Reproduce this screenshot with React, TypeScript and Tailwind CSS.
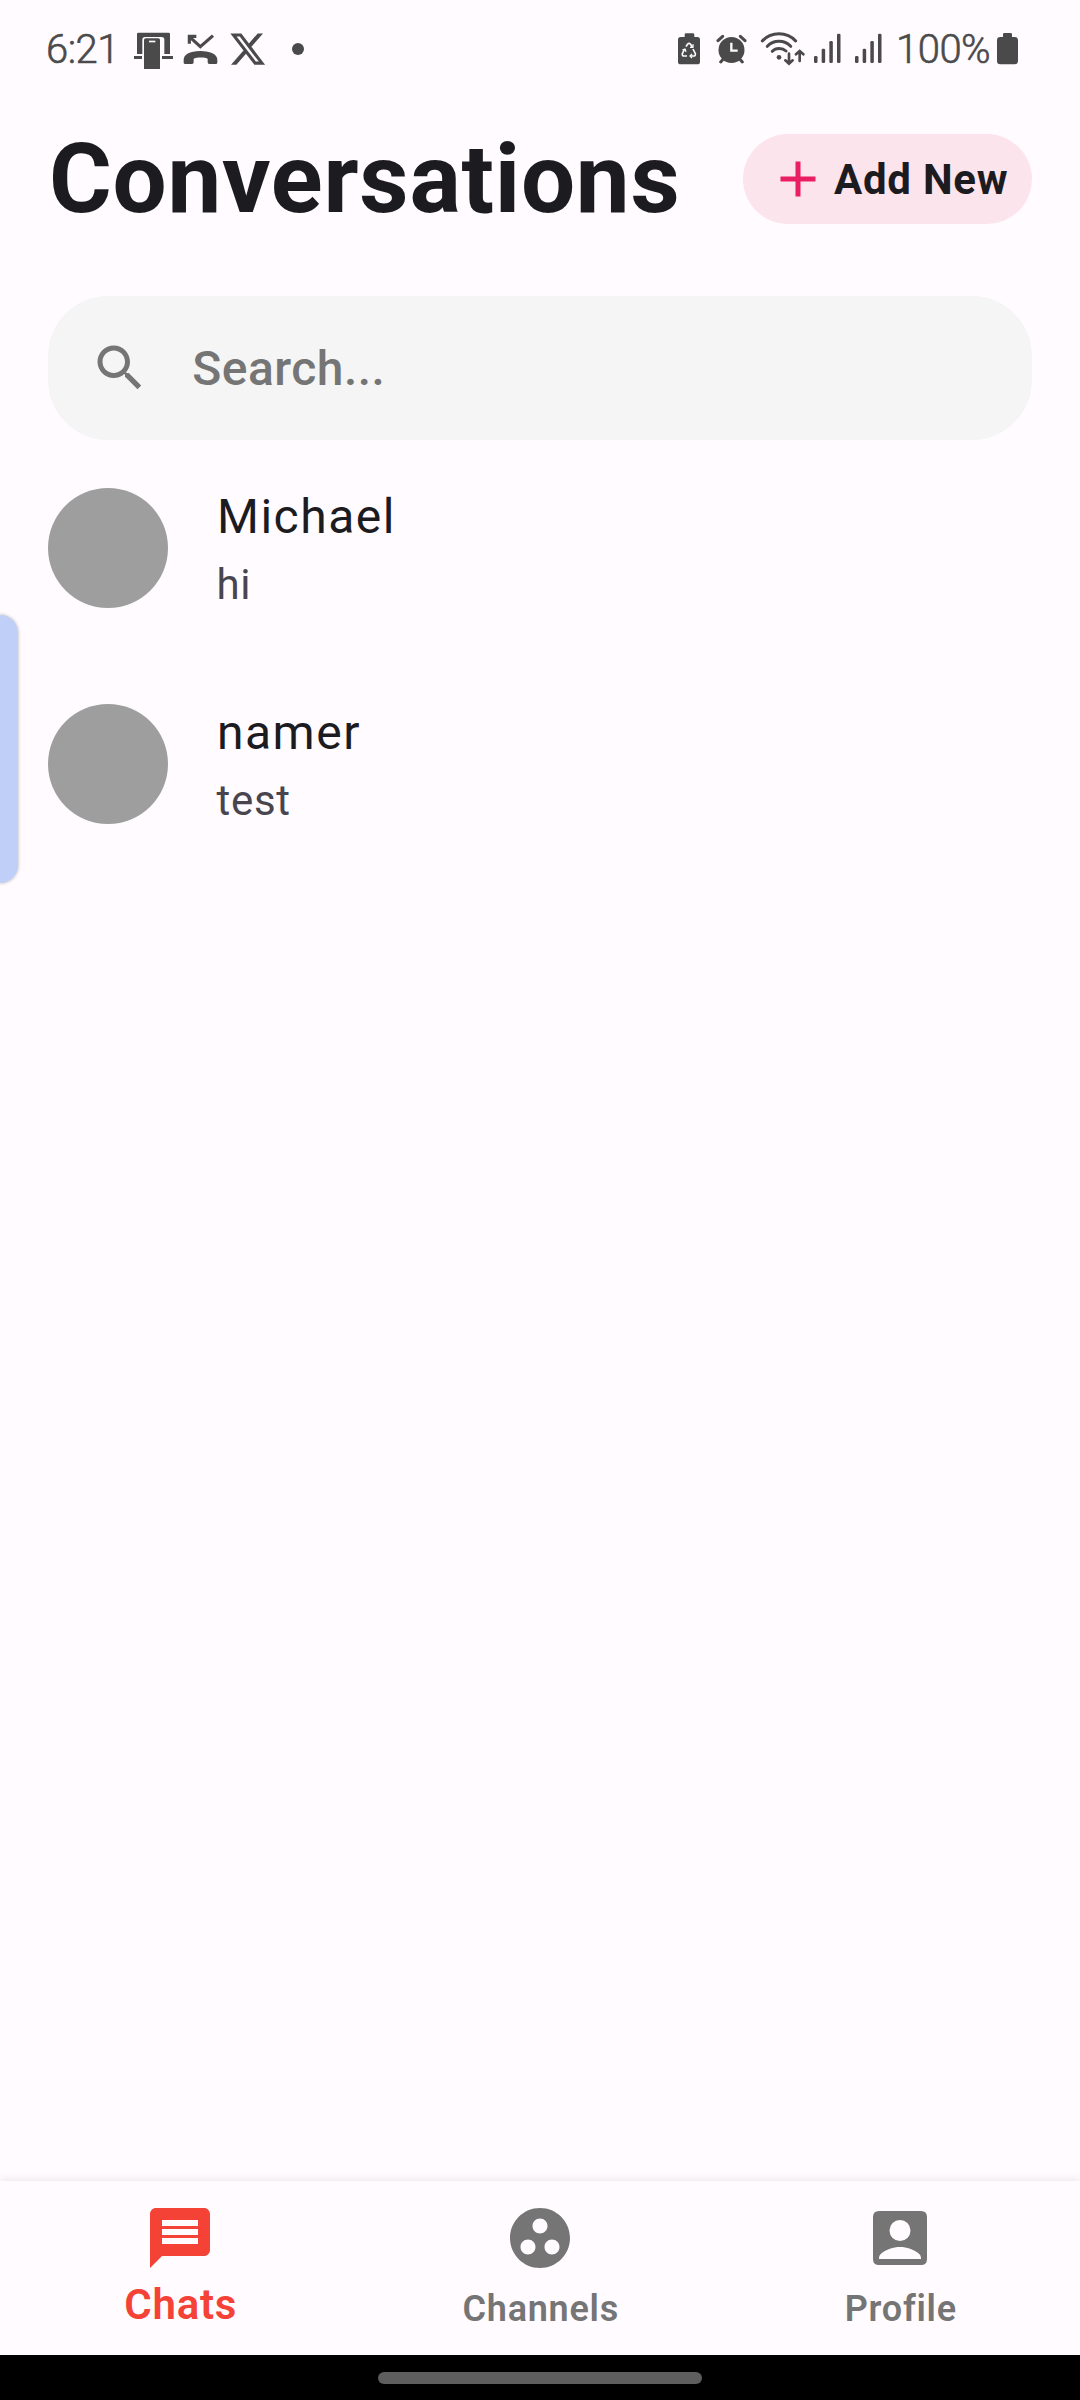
import type { ReactNode } from "react";

const ink = "#4b4a4b";

function Glyph({ x, w, className, children }: { x: number; w: number; className: string; children: ReactNode }) {
  return (
    <svg viewBox={`${x} 0 ${w} 180`} className={`h-[60px] shrink-0 ${className}`} fill={ink}>
      {children}
    </svg>
  );
}

function SignalBars({ className }: { className: string }) {
  return (
    <Glyph x={0} w={81} className={`w-[27px] ${className}`}>
      <rect x="0" y="108" width="10.5" height="21" rx="4" />
      <rect x="23" y="86" width="10.5" height="43" rx="4" />
      <rect x="46" y="63" width="10.5" height="66" rx="4" />
      <rect x="69" y="41" width="10.5" height="88" rx="4" />
    </Glyph>
  );
}

function StatusBar() {
  return (
    <div className="flex h-24 items-start justify-between pt-5 pr-[62px] pl-[46px] text-[#4b4a4b]">
      <div className="flex items-center">
        <span className="w-[88px] text-[40px] leading-[60px] font-light tracking-[-0.5px] whitespace-nowrap [-webkit-text-stroke:0.6px_#4b4a4b]">6:21</span>
        <Glyph x={312} w={117} className="w-[39px]">
          <path d="M325 38h91q4 0 4 4v60h-17V59q0-8-8-8h-50q-8 0-8 8v43h-16V42q0-4 4-4z" />
          <path d="M347 55h38q5 0 5 5v87h-48V60q0-5 5-5z" />
          <path d="M312 108h24v9h-24zM396 108h33v9h-33z" />
          <rect x="357" y="62" width="19" height="5" fill="#fffbff" />
        </Glyph>
        <Glyph x={459} w={105} className="ml-2.5 w-[35px]">
          <path d="M478 50l33 30 38-33M478 71V49h21" fill="none" stroke={ink} strokeWidth="9.5" />
          <path d="M461 119c0-14 17-26 50-26s51 12 51 26v9q0 4-5 4h-19q-5 0-5-5v-11c-6-5-34-5-42 0v11q0 5-5 5h-20q-5 0-5-4z" />
        </Glyph>
        <Glyph x={600} w={108} className="ml-3 w-[36px]">
          <path transform="translate(595 29.3) scale(4.83)" d="M18.244 2.25h3.308l-7.227 8.26 8.502 11.24H16.17l-5.214-6.817L4.99 21.75H1.68l7.73-8.835L1.254 2.25H8.08l4.713 6.231zm-1.161 17.52h1.833L7.084 4.126H5.117z" />
        </Glyph>
        <span className="mt-[-2px] ml-[26px] size-3 rounded-full bg-[#4b4a4b]" />
      </div>
      <div className="flex items-center">
        <Glyph x={54} w={66} className="w-[22px]">
          <path d="M78 40h21q4 0 4 4v7h9q8 0 8 8v66q0 8-8 8H62q-8 0-8-8V59q0-8 8-8h12v-7q0-4 4-4z" />
          <g fill="none" stroke="#fffbff" strokeWidth="5" strokeLinejoin="round">
            <path d="M78 80l5-8q4-4 8 0l6 9M74 87l-7 14q-1 7 5 7h9M99 87l7 14q1 7-5 7H91" />
            <path d="M99 73v9h-9M67 90l8-3 3 8M96 102l-6 6 6 6" strokeWidth="4" />
          </g>
        </Glyph>
        <Glyph x={168} w={93} className="ml-4 w-[31px]">
          <circle cx="214.500" cy="90" r="39" />
          <path d="M174 62l14-13M255 62l-14-13M190 117l-8 9M239 117l8 9" stroke={ink} strokeWidth="9" strokeLinecap="round" />
          <path d="M214 68v24h19" fill="none" stroke="#fffbff" strokeWidth="7" />
        </Glyph>
        <Glyph x={300} w={135} className="ml-[13px] w-[45px]">
          <g fill="none" stroke={ink} strokeWidth="9" strokeLinecap="round">
            <path d="M307 63c26-29 74-29 100 0M322 79c19-20 51-20 70 0M337 94c10-11 30-11 41-1" />
            <path d="M387 101v29M376 121l11 10 11-10M419 123V94M408 103l11-10 11 10" strokeWidth="8" />
          </g>
          <circle cx="357" cy="112" r="7" />
        </Glyph>
        <SignalBars className="ml-[9px]" />
        <SignalBars className="ml-[14px]" />
        <span className="ml-[14px] w-[101px] text-[40px] leading-[60px] font-light tracking-[-0.5px] whitespace-nowrap [-webkit-text-stroke:0.6px_#4b4a4b]">100%</span>
        <Glyph x={471} w={63} className="w-[21px]">
          <path d="M493 39h19q4 0 4 4v8h8q10 0 10 10v62q0 10-10 10h-43q-10 0-10-10V61q0-10 10-10h8v-8q0-4 4-4z" />
        </Glyph>
      </div>
    </div>
  );
}

const chats = [
  { name: "Michael", message: "hi" },
  { name: "namer", message: "test" },
];

const tabs = [
  {
    label: "Chats",
    active: true,
    path: "M20 2H4c-1.100 0-2 .9-2 2v18l4-4h14c1.100 0 2-.9 2-2V4c0-1.100-.9-2-2-2zM6 6h12v2H6zm0 3h12v2H6zm0 3h12v2H6z",
  },
  {
    label: "Channels",
    active: false,
    path: "M12 2C6.480 2 2 6.480 2 12s4.480 10 10 10 10-4.480 10-10S17.520 2 12 2zM8 17.500c-1.380 0-2.500-1.120-2.500-2.500s1.120-2.500 2.500-2.500 2.500 1.120 2.500 2.500-1.120 2.500-2.500 2.500zM9.500 8c0-1.380 1.120-2.500 2.500-2.500s2.500 1.120 2.500 2.500-1.120 2.500-2.500 2.500S9.500 9.380 9.500 8zm6.500 9.500c-1.380 0-2.500-1.120-2.500-2.500s1.120-2.500 2.500-2.500 2.500 1.120 2.500 2.500-1.120 2.500-2.500 2.500z",
  },
  {
    label: "Profile",
    active: false,
    path: "M5 3h14q2 0 2 2v14q0 2-2 2H5q-2 0-2-2V5q0-2 2-2zM12 6a3.500 3.500 0 1 0 0 7 3.500 3.500 0 0 0 0-7zM19 19v-.23c0-.62-.28-1.200-.76-1.580C16.530 15.820 14.360 15 12 15s-4.530.82-6.240 2.190C5.280 17.570 5 18.150 5 18.770V19z",
  },
];

export default function App() {
  return (
    <div className="relative flex h-[2400px] w-[1080px] flex-col overflow-hidden bg-[#fffbff] font-['Roboto',sans-serif] text-[#1c1b1f]">
      <StatusBar />
      <header className="mt-[27px] flex h-[112px] items-center justify-between pr-12 pl-[49px]">
        <h1 className="text-[96px] leading-[112px] font-bold tracking-[0.75px]">Conversations</h1>
        <button className="flex h-[90px] w-[289px] items-center rounded-full bg-[#fce4ec] pl-[25px]">
          <svg viewBox="0 0 24 24" className="size-[60px]" fill="#e91e63">
            <path d="M19 13h-6v6h-2v-6H5v-2h6V5h2v6h6z" />
          </svg>
          <span className="mt-0.5 ml-1.5 text-[42px] leading-[60px] font-bold tracking-[0.75px] whitespace-nowrap">Add New</span>
        </button>
      </header>
      <div className="mx-12 mt-[61px] flex h-36 items-center rounded-[60px] bg-[#f5f5f5] pl-[42px] text-[#757575]">
        <svg viewBox="0 0 24 24" className="size-[60px]" fill="currentColor">
          <path d="M15.500 14h-.79l-.28-.27C15.410 12.590 16 11.110 16 9.500 16 5.910 13.090 3 9.500 3S3 5.910 3 9.500 5.910 16 9.500 16c1.610 0 3.090-.59 4.230-1.570l.27.28v.79l5 4.990L20.490 19zm-6 0C7.010 14 5 11.990 5 9.500S7.010 5 9.500 5 14 7.010 14 9.500 11.990 14 9.500 14z" />
        </svg>
        <span className="mt-0.5 ml-[42.3px] text-[48px] leading-[72px] font-medium tracking-[0.45px]">Search...</span>
      </div>
      <main className="flex-1">
        {chats.map((c) => (
          <div key={c.name} className="flex h-[216px] items-center gap-12 px-12">
            <div className="size-[120px] rounded-full bg-[#9e9e9e]" />
            <div>
              <div className="mb-0.5 pl-px text-[48px] leading-[72px] tracking-[1.5px]">{c.name}</div>
              <div className="pl-[0.4px] text-[42px] leading-[60px] tracking-[0.75px] text-[#49454f]">{c.message}</div>
            </div>
          </div>
        ))}
      </main>
      <div className="absolute top-[615px] left-0 h-[268px] w-[18px] rounded-r-[18px] bg-[#bfcff8] shadow-[0_0_3px_1px_rgba(0,0,0,0.18)]" />
      <nav className="grid h-[174px] grid-cols-3 bg-[#fffbff] shadow-[0_-1px_9px_rgba(0,0,0,0.09)]">
        {tabs.map((t) => (
          <div key={t.label} className={t.active ? "flex flex-col items-center pt-[21px] text-[#f44336]" : "flex flex-col items-center pt-[21px] text-[#757575]"}>
            <svg viewBox="0 0 24 24" className="size-[72px]" fill="currentColor" fillRule="evenodd">
              <path d={t.path} />
            </svg>
            <span className={t.active ? "mt-px pl-[1.5px] text-[42px] leading-[60px] font-semibold tracking-[0.75px]" : "mt-[5px] pl-[1.5px] text-[36px] leading-[60px] font-semibold tracking-[0.75px]"}>{t.label}</span>
          </div>
        ))}
      </nav>
      <div className="flex h-[45px] justify-center bg-black pt-[17px]">
        <div className="h-3 w-[324px] rounded-full bg-[#5e5e5e]" />
      </div>
    </div>
  );
}
